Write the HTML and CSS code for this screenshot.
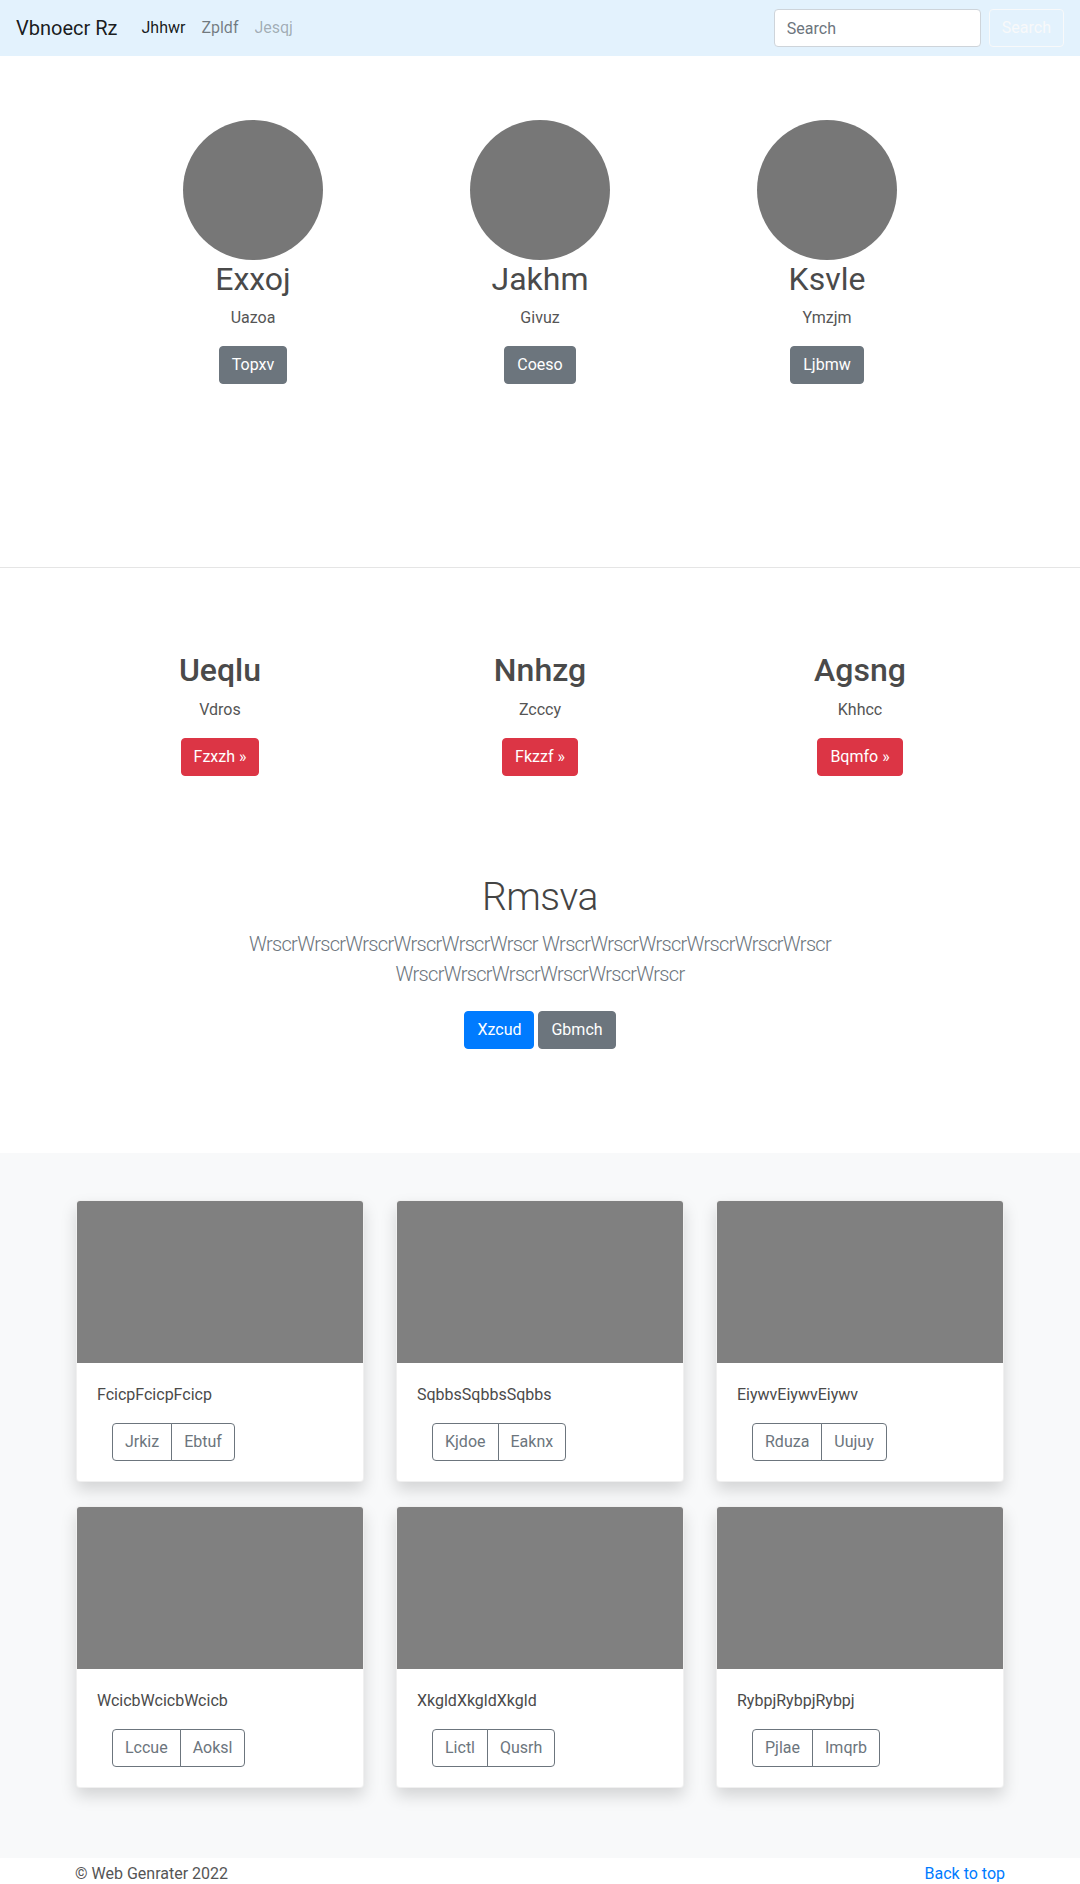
FILE: index.html
```html
<!DOCTYPE html>
<html lang="en">
<head>
<meta charset="utf-8">
<title>Vbnoecr Rz</title>
<link rel="stylesheet" href="styles.css">
</head>
<body>
<nav class="navbar">
  <a class="brand" href="#">Vbnoecr Rz</a>
  <ul class="nav-links">
    <li><a class="nav-link active" href="#">Jhhwr</a></li>
    <li><a class="nav-link" href="#">Zpldf</a></li>
    <li><a class="nav-link disabled" href="#">Jesqj</a></li>
  </ul>
  <form class="search-form">
    <input class="search-input" type="search" placeholder="Search">
    <button class="btn-outline-light" type="button">Search</button>
  </form>
</nav>

<section class="marketing">
  <div class="marketing-row">
    <div class="person">
      <div class="avatar"></div>
      <h2 class="person-name">Exxoj</h2>
      <p class="person-sub">Uazoa</p>
      <p class="btn-line"><a class="btn btn-secondary" href="#">Topxv</a></p>
    </div>
    <div class="person">
      <div class="avatar"></div>
      <h2 class="person-name">Jakhm</h2>
      <p class="person-sub">Givuz</p>
      <p class="btn-line"><a class="btn btn-secondary" href="#">Coeso</a></p>
    </div>
    <div class="person">
      <div class="avatar"></div>
      <h2 class="person-name">Ksvle</h2>
      <p class="person-sub">Ymzjm</p>
      <p class="btn-line"><a class="btn btn-secondary" href="#">Ljbmw</a></p>
    </div>
  </div>
</section>

<hr class="divider">

<section class="features">
  <div class="feature">
    <h2 class="feature-title">Ueqlu</h2>
    <p class="feature-sub">Vdros</p>
    <p class="btn-line"><a class="btn btn-danger" href="#">Fzxzh &raquo;</a></p>
  </div>
  <div class="feature">
    <h2 class="feature-title">Nnhzg</h2>
    <p class="feature-sub">Zcccy</p>
    <p class="btn-line"><a class="btn btn-danger" href="#">Fkzzf &raquo;</a></p>
  </div>
  <div class="feature">
    <h2 class="feature-title">Agsng</h2>
    <p class="feature-sub">Khhcc</p>
    <p class="btn-line"><a class="btn btn-danger" href="#">Bqmfo &raquo;</a></p>
  </div>
</section>

<section class="jumbo">
  <h1 class="jumbo-title">Rmsva</h1>
  <p class="lead">WrscrWrscrWrscrWrscrWrscrWrscr WrscrWrscrWrscrWrscrWrscrWrscr WrscrWrscrWrscrWrscrWrscrWrscr</p>
  <p class="jumbo-actions">
    <a class="btn btn-primary" href="#">Xzcud</a>
    <a class="btn btn-secondary" href="#">Gbmch</a>
  </p>
</section>

<section class="album">
  <div class="album-grid">
    <div class="card-col"><div class="card"><div class="card-img"></div><div class="card-body"><p class="card-text">FcicpFcicpFcicp</p><div class="btn-group"><button class="btn-outline">Jrkiz</button><button class="btn-outline">Ebtuf</button></div></div></div></div>
    <div class="card-col"><div class="card"><div class="card-img"></div><div class="card-body"><p class="card-text">SqbbsSqbbsSqbbs</p><div class="btn-group"><button class="btn-outline">Kjdoe</button><button class="btn-outline">Eaknx</button></div></div></div></div>
    <div class="card-col"><div class="card"><div class="card-img"></div><div class="card-body"><p class="card-text">EiywvEiywvEiywv</p><div class="btn-group"><button class="btn-outline">Rduza</button><button class="btn-outline">Uujuy</button></div></div></div></div>
    <div class="card-col"><div class="card"><div class="card-img"></div><div class="card-body"><p class="card-text">WcicbWcicbWcicb</p><div class="btn-group"><button class="btn-outline">Lccue</button><button class="btn-outline">Aoksl</button></div></div></div></div>
    <div class="card-col"><div class="card"><div class="card-img"></div><div class="card-body"><p class="card-text">XkgldXkgldXkgld</p><div class="btn-group"><button class="btn-outline">Lictl</button><button class="btn-outline">Qusrh</button></div></div></div></div>
    <div class="card-col"><div class="card"><div class="card-img"></div><div class="card-body"><p class="card-text">RybpjRybpjRybpj</p><div class="btn-group"><button class="btn-outline">Pjlae</button><button class="btn-outline">Imqrb</button></div></div></div></div>
  </div>
</section>

<footer class="footer">
  <div class="footer-inner">
    <span class="copy">&copy; Web Genrater 2022</span>
    <a class="back-top" href="#">Back to top</a>
  </div>
</footer>
</body>
</html>
```

FILE: styles.css
```css
* { box-sizing: border-box; }

html, body {
  margin: 0;
  padding: 0;
}

body {
  font-family: Roboto, "Open Sans", "Liberation Sans", sans-serif;
  font-size: 16px;
  line-height: 1.5;
  color: #3c3f42;
  background: #fff;
}

a { text-decoration: none; }

/* ---------- navbar ---------- */
.navbar {
  height: 56px;
  background: #e3f2fd;
  display: flex;
  align-items: center;
  padding: 0 16px;
}

.brand {
  font-size: 20px;
  line-height: 30px;
  color: rgba(0, 0, 0, 0.9);
  margin-right: 16px;
}

.nav-links {
  list-style: none;
  margin: 0;
  padding: 0;
  display: flex;
}

.nav-link {
  display: block;
  padding: 8px;
  color: rgba(0, 0, 0, 0.5);
}

.nav-link.active { color: rgba(0, 0, 0, 0.9); }
.nav-link.disabled { color: rgba(0, 0, 0, 0.3); }

.search-form {
  margin-left: auto;
  display: flex;
  align-items: center;
}

.search-input {
  width: 207px;
  height: 38px;
  padding: 6px 12px;
  font: inherit;
  font-size: 16px;
  color: #495057;
  background: #fff;
  border: 1px solid #ced4da;
  border-radius: 4px;
  margin-right: 8px;
}

.search-input::placeholder { color: #6c757d; }

.btn-outline-light {
  height: 38px;
  padding: 6px 12px;
  font: inherit;
  font-size: 16px;
  color: #f8f9fa;
  background: transparent;
  border: 1px solid #f8f9fa;
  border-radius: 4px;
}

/* ---------- buttons ---------- */
.btn {
  display: inline-block;
  padding: 6px 12px;
  font-size: 16px;
  line-height: 24px;
  border: 1px solid transparent;
  border-radius: 4px;
  color: #fff;
  vertical-align: middle;
}

.btn-secondary { background: #6c757d; border-color: #6c757d; }
.btn-danger { background: #dc3545; border-color: #dc3545; }
.btn-primary { background: #007bff; border-color: #007bff; }

.btn-line { margin: 0; }

/* ---------- marketing ---------- */
.marketing {
  padding-top: 64px;
  padding-bottom: 167px;
}

.marketing-row {
  width: 861px;
  margin: 0 auto;
  display: grid;
  grid-template-columns: repeat(3, 1fr);
}

.person {
  text-align: center;
  padding-bottom: 16px;
}

.avatar {
  width: 140px;
  height: 140px;
  border-radius: 50%;
  background: #777;
  margin: 0 auto;
}

.person-name {
  font-size: 32px;
  font-weight: 400;
  line-height: 1.2;
  margin: 0 0 8px;
  color: #4a4a4a;
}

.person-sub {
  margin: 0 0 16px;
  color: #555;
}

.divider {
  border: 0;
  border-top: 1px solid rgba(0, 0, 0, 0.1);
  margin: 0;
  height: 0;
}

/* ---------- features ---------- */
.features {
  width: 960px;
  margin: 0 auto;
  padding-top: 83px;
  display: grid;
  grid-template-columns: repeat(3, 1fr);
}

.feature { text-align: center; }

.feature-title {
  font-size: 32px;
  font-weight: 500;
  line-height: 1.2;
  margin: 0 0 8px;
  color: #4a4a4a;
}

.feature-sub {
  margin: 0 0 16px;
  color: #555;
}

/* ---------- jumbotron ---------- */
.jumbo {
  text-align: center;
  padding-top: 97px;
  padding-bottom: 104px;
}

.jumbo-title {
  font-size: 39px;
  font-weight: 300;
  line-height: 48px;
  letter-spacing: -0.5px;
  margin: 0 0 8px;
  color: #444;
}

.lead {
  font-size: 20px;
  font-weight: 300;
  line-height: 30px;
  letter-spacing: -0.7px;
  color: #6c757d;
  max-width: 620px;
  margin: 0 auto 22px;
}

.jumbo-actions {
  margin: 0;
  display: flex;
  justify-content: center;
  gap: 4px;
}

/* ---------- album ---------- */
.album {
  background: #f8f9fa;
  padding: 47px 0 46px;
}

.album-grid {
  width: 960px;
  margin: 0 auto;
  display: grid;
  grid-template-columns: repeat(3, 1fr);
}

.card-col {
  padding: 0 16px;
  margin-bottom: 24px;
}

.card {
  background: #fff;
  border: 1px solid rgba(0, 0, 0, 0.06);
  border-radius: 4px;
  overflow: hidden;
  box-shadow: 0 8px 16px rgba(0, 0, 0, 0.15);
}

.card-img {
  height: 162px;
  background: #808080;
}

.card-body {
  padding: 20px;
}

.card-text {
  margin: 0 0 16px;
  color: #4a4a4a;
}

.btn-group {
  display: inline-flex;
  margin-left: 15px;
}

.btn-outline {
  font: inherit;
  font-size: 16px;
  line-height: 24px;
  padding: 6px 12px;
  background: transparent;
  color: #6c757d;
  border: 1px solid #6c757d;
  border-radius: 0;
}

.btn-outline:first-child { border-radius: 4px 0 0 4px; }
.btn-outline:last-child { border-radius: 0 4px 4px 0; margin-left: -1px; }

/* ---------- footer ---------- */
.footer {
  padding-top: 4px;
}

.footer-inner {
  width: 960px;
  margin: 0 auto;
  padding: 0 15px;
  display: flex;
  justify-content: space-between;
}

.copy { color: #555; }
.back-top { color: #007bff; }
```
